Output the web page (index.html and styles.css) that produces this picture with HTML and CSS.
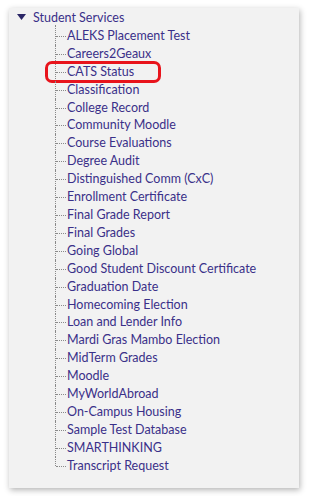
FILE: index.html
```html
<!DOCTYPE html>
<html>
<head>
<meta charset="utf-8">
<link rel="stylesheet" href="styles.css">
</head>
<body>
<div class="panel">
  <div class="root">
    <svg class="caret" width="9" height="6" viewBox="0 0 9 6"><polygon points="0,0 9,0 4.5,6" fill="#2a2666"/></svg>
    <span class="label">Student Services</span>
  </div>
  <ul class="tree">
    <li><span class="label">ALEKS Placement Test</span></li>
    <li><span class="label">Careers2Geaux</span></li>
    <li class="marked"><span class="label">CATS Status</span><span class="ring"></span></li>
    <li><span class="label">Classification</span></li>
    <li><span class="label">College Record</span></li>
    <li><span class="label">Community Moodle</span></li>
    <li><span class="label">Course Evaluations</span></li>
    <li><span class="label">Degree Audit</span></li>
    <li><span class="label">Distinguished Comm (CxC)</span></li>
    <li><span class="label">Enrollment Certificate</span></li>
    <li><span class="label">Final Grade Report</span></li>
    <li><span class="label">Final Grades</span></li>
    <li><span class="label">Going Global</span></li>
    <li><span class="label">Good Student Discount Certificate</span></li>
    <li><span class="label">Graduation Date</span></li>
    <li><span class="label">Homecoming Election</span></li>
    <li><span class="label">Loan and Lender Info</span></li>
    <li><span class="label">Mardi Gras Mambo Election</span></li>
    <li><span class="label">MidTerm Grades</span></li>
    <li><span class="label">Moodle</span></li>
    <li><span class="label">MyWorldAbroad</span></li>
    <li><span class="label">On-Campus Housing</span></li>
    <li><span class="label">Sample Test Database</span></li>
    <li><span class="label">SMARTHINKING</span></li>
    <li class="last"><span class="label">Transcript Request</span></li>
  </ul>
</div>
</body>
</html>
```

FILE: styles.css
```css
html, body {
  margin: 0;
  padding: 0;
  background: #ffffff;
}
body {
  width: 308px;
  height: 496px;
  overflow: hidden;
  font-family: "Lato", "Open Sans", sans-serif;
  font-size: 12.5px;
  color: #3a3089;
}
.panel {
  margin: 8px 0 0 9px;
  width: 290px;
  height: 480px;
  box-sizing: border-box;
  background: #f2f2f2;
  box-shadow: 1px 2px 6px rgba(0, 0, 0, 0.3);
  padding: 1px 0 0 8px;
}
.root {
  display: flex;
  align-items: center;
  height: 18px;
}
.caret {
  margin-right: 7px;
  margin-top: -2px;
}
.label {
  white-space: nowrap;
  line-height: 18px;
}
.tree {
  list-style: none;
  margin: 0;
  padding: 0 0 0 38px;
}
.tree li {
  position: relative;
  height: 17.92px;
  display: flex;
  align-items: center;
  padding-left: 12px;
}
.tree li::before {
  content: "";
  position: absolute;
  left: 0;
  top: 0;
  bottom: 0;
  border-left: 1px dotted #8a8a8a;
}
.tree li::after {
  content: "";
  position: absolute;
  left: 1px;
  top: 50%;
  width: 10px;
  border-top: 1px dotted #8a8a8a;
}
.tree li.last::before {
  bottom: 50%;
}
.tree li:first-child::before {
  top: -2px;
}
.ring {
  position: absolute;
  left: -10px;
  top: -2px;
  width: 110px;
  height: 16px;
  border: 3px solid #e8141c;
  border-radius: 7px;
}
```
